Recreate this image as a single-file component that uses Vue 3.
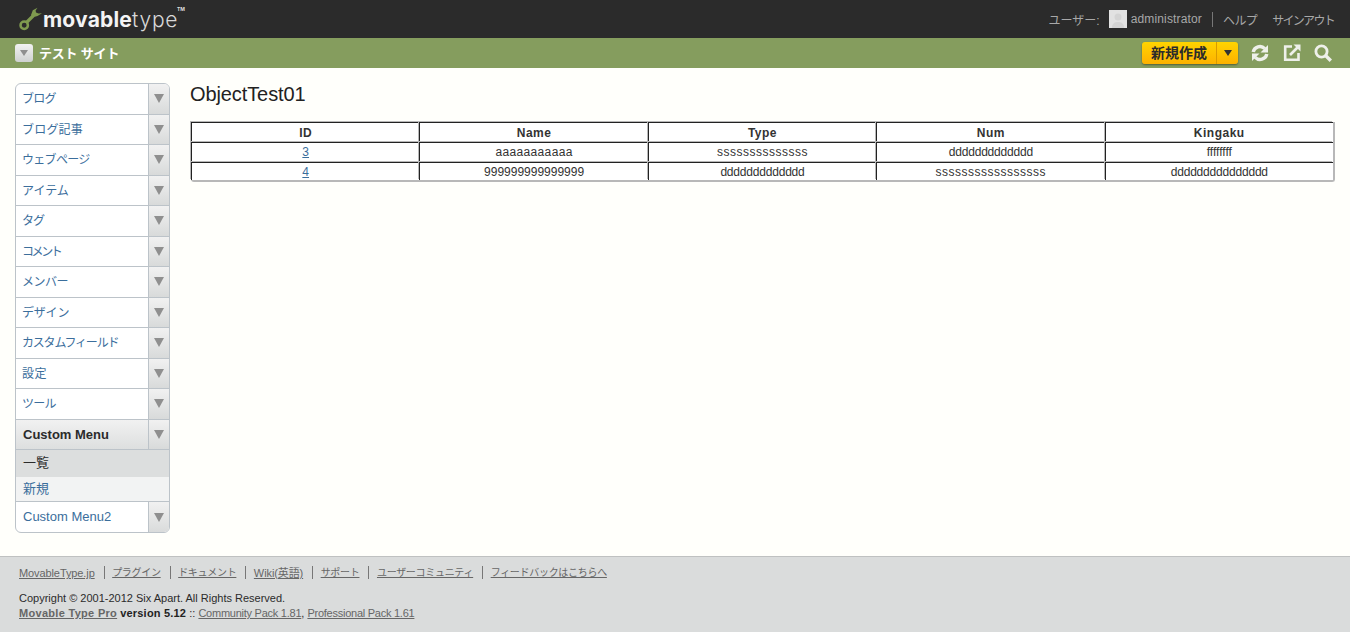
<script setup>
const menu = [
  { t: 'ブログ', ls: -0.7 }, { t: 'ブログ記事', ls: 0.2 }, { t: 'ウェブページ', ls: -0.7 },
  { t: 'アイテム', ls: 0 }, { t: 'タグ', ls: -1 }, { t: 'コメント', ls: -2.4 },
  { t: 'メンバー', ls: -0.5 }, { t: 'デザイン', ls: -0.2 }, { t: 'カスタムフィールド', ls: -1.2 },
  { t: '設定', ls: 0.5 }, { t: 'ツール', ls: -0.7 },
]
const rows = [
  ['3','aaaaaaaaaaa','ssssssssssssss','ddddddddddddd','ffffffff'],
  ['4','999999999999999','ddddddddddddd','sssssssssssssssss','ddddddddddddddd'],
]
const spacing = { a: 0.35, s: 0.5, d: -0.2 }
const heads = ['ID','Name','Type','Num','Kingaku']
const links = ['MovableType.jp','プラグイン','ドキュメント','Wiki(英語)','サポート','ユーザーコミュニティ','フィードバックはこちらへ']
</script>

<template>
  <div class="page">
    <header class="top">
      <div class="logo">
        <svg class="wrench" width="26" height="26" viewBox="0 0 26 26">
          <circle cx="6.200" cy="19.200" r="3.700" fill="none" stroke="#7f9a4f" stroke-width="2.500"/>
          <path d="M8.500 16.500L15.500 9.500" stroke="#7f9a4f" stroke-width="3.200"/>
          <path d="M19.500 1.800L14.800 4.200L13 9L15 11.200L19.500 10L24 7.200L20.500 7.600L18 6.500L17.600 4.400z" fill="#7f9a4f"/>
        </svg>
        <span class="mv">movable</span><span class="ty">type</span><span class="tm">TM</span>
      </div>
      <div class="user">
        <span>ユーザー:</span>
        <span class="avatar">
          <svg width="18" height="18" viewBox="0 0 18 18"><rect width="18" height="18" fill="#e2e2e2"/><circle cx="9" cy="7" r="3.500" fill="#d4d4d4"/><path d="M3 18c0-5 3-6 6-6s6 1 6 6z" fill="#d4d4d4"/></svg>
        </span>
        <span class="name">administrator</span>
        <span class="sep"></span>
        <span class="help">ヘルプ</span>
        <span class="signout">サインアウト</span>
      </div>
    </header>

    <div class="site">
      <div class="site-left">
        <span class="site-btn"><i class="tri small"></i></span>
        <span class="site-name">テスト サイト</span>
      </div>
      <div class="site-right">
        <div class="create">
          <span class="create-label">新規作成</span>
          <span class="create-arrow"><i class="tri dark"></i></span>
        </div>
        <svg class="ic" width="20" height="20" viewBox="0 0 20 20" fill="none">
          <path d="M3.200 9A6.800 6.800 0 0 1 14.800 5.600" stroke="#eef0ea" stroke-width="3.400"/>
          <path d="M18 2v7.500h-7.500z" fill="#eef0ea"/>
          <path d="M16.800 11A6.800 6.800 0 0 1 5.200 14.400" stroke="#eef0ea" stroke-width="3.400"/>
          <path d="M2 18v-7.500h7.500z" fill="#eef0ea"/>
        </svg>
        <svg class="ic" width="20" height="20" viewBox="0 0 20 20" fill="none">
          <path d="M10 3.500H3.200v13.300h13.300V10" stroke="#eef0ea" stroke-width="2.600"/>
          <path d="M8 12l8-8" stroke="#eef0ea" stroke-width="2.600"/>
          <path d="M11.500 1.500H18.500V8.500z" fill="#eef0ea"/>
        </svg>
        <svg class="ic" width="20" height="20" viewBox="0 0 20 20" fill="none">
          <circle cx="8.500" cy="8.500" r="5.600" stroke="#eef0ea" stroke-width="2.800"/>
          <path d="M12.800 12.800l5 5" stroke="#eef0ea" stroke-width="3.400"/>
        </svg>
      </div>
    </div>

    <main class="body">
      <nav class="side">
        <div v-for="m in menu" :key="m.t" class="item">
          <a class="label" :style="{ letterSpacing: m.ls + 'px' }">{{ m.t }}</a>
          <span class="arrow"><i class="tri"></i></span>
        </div>
        <div class="item open">
          <a class="label strong">Custom Menu</a>
          <span class="arrow"><i class="tri"></i></span>
        </div>
        <div class="sub current">一覧</div>
        <div class="sub">新規</div>
        <div class="item last">
          <a class="label">Custom Menu2</a>
          <span class="arrow"><i class="tri"></i></span>
        </div>
      </nav>
      <section class="content">
        <h1>ObjectTest01</h1>
        <table>
          <thead>
            <tr><th v-for="h in heads" :key="h">{{ h }}</th></tr>
          </thead>
          <tbody>
            <tr v-for="r in rows" :key="r[0]">
              <td><a>{{ r[0] }}</a></td>
              <td v-for="(c, i) in r.slice(1)" :key="i" :style="{ letterSpacing: (spacing[c[0]] || 0) + 'px' }">{{ c }}</td>
            </tr>
          </tbody>
        </table>
      </section>
    </main>

    <footer class="foot">
      <div class="links">
        <a v-for="l in links" :key="l">{{ l }}</a>
      </div>
      <div class="copy">Copyright © 2001-2012 Six Apart. All Rights Reserved.</div>
      <div class="ver"><a class="b">Movable Type Pro</a> <b>version 5.12</b> :: <a class="pk">Community Pack 1.81</a>, <a class="pk">Professional Pack 1.61</a></div>
    </footer>
  </div>
</template>

<style>
html, body { margin: 0; background: #fffffb; }
</style>

<style scoped>
.page {
  height: 632px;
  display: flex;
  flex-direction: column;
  overflow: hidden;
  font-family: "Liberation Sans", "Noto Sans CJK JP", sans-serif;
  font-size: 12px;
  color: #2b2b2b;
  background: #fffffb;
}
.top {
  height: 38px;
  background: #2b2b2b;
  display: flex;
  justify-content: space-between;
  align-items: center;
  padding: 0 16px 0 18px;
  flex: none;
}
.logo {
  display: flex;
  align-items: baseline;
  position: relative;
  height: 38px;
  line-height: 40px;
  padding-left: 25px;
  color: #f2f2f2;
  font-family: Inter, "Liberation Sans", sans-serif;
  font-size: 21px;
}
.wrench { position: absolute; left: 0; top: 6px; }
.mv { font-weight: 700; color: #f4f4f4; letter-spacing: .2px; }
.ty { font-weight: 300; color: #d8d8d8; letter-spacing: .7px; }
.tm { position: absolute; left: 159px; top: -11px; font-size: 5px; font-weight: 700; color: #ddd; }
.user {
  display: flex;
  align-items: center;
  color: #a8a8a8;
  font-size: 12px;
}
.avatar { width: 18px; height: 18px; margin: 0 4px 0 9px; display: block; }
.avatar svg { display: block; }
.name { letter-spacing: .15px; }
.sep { width: 1px; height: 15px; background: #777; margin: 0 10px; }
.help { letter-spacing: -.6px; }
.signout { margin-left: 15px; letter-spacing: -1.7px; }
.site {
  height: 30px;
  background: #859d5e;
  flex: none;
  display: flex;
  justify-content: space-between;
  align-items: center;
  padding: 0 17px 0 15px;
}
.site-left { display: flex; align-items: center; }
.site-btn {
  width: 18px;
  height: 18px;
  border-radius: 3px;
  background: linear-gradient(#f2f2f2, #cfd1d1);
  display: flex;
  align-items: center;
  justify-content: center;
}
.site-name { color: #fff; font-size: 13px; font-weight: 700; margin: -2px 0 0 6px; letter-spacing: -.2px; }
.site-right { display: flex; align-items: center; }
.create {
  width: 96px;
  height: 22px;
  border-radius: 3px;
  background: linear-gradient(#ffd400, #fdb100);
  box-shadow: 0 1px 2px rgba(0,0,0,.4);
  display: flex;
  margin-right: 12px;
}
.create-label {
  width: 74px;
  text-align: center;
  font-size: 14px;
  font-weight: 700;
  line-height: 23px;
  color: #2b2b2b;
  border-right: 1px solid #d99a00;
}
.create-arrow { flex: 1; display: flex; align-items: center; justify-content: center; }
.ic { display: block; margin-right: 11.500px; }
.ic:last-child { margin-right: 0; }
.tri {
  display: block;
  width: 0;
  height: 0;
  border-left: 5.500px solid transparent;
  border-right: 5.500px solid transparent;
  border-top: 9px solid #8f8f8f;
}
.tri.small { border-left-width: 4px; border-right-width: 4px; border-top-width: 6px; }
.tri.dark { border-left-width: 4px; border-right-width: 4px; border-top: 6px solid #333; }
.body {
  flex: 1;
  display: flex;
  padding: 15px 15px 0 15px;
  min-height: 0;
}
.side {
  width: 155px;
  height: 450px;
  box-sizing: border-box;
  border: 1px solid #bcc3c9;
  border-radius: 6px;
  flex: none;
  overflow: hidden;
  background: #fff;
}
.item {
  height: 30.500px;
  box-sizing: border-box;
  border-bottom: 1px solid #bcc3c9;
  display: flex;
}
.item.open { height: 30px; }
.item.last { border-bottom: 0; height: 32px; }
.label {
  flex: 1;
  padding-left: 6px;
  line-height: 31px;
  color: #3b6e9c;
  font-size: 12px;
}
.label.strong { color: #2b2b2b; font-weight: 700; font-size: 13px; padding-left: 7px; line-height: 30px; }
.item.last .label { padding-left: 7px; font-size: 13px; line-height: 29px; }
.arrow {
  width: 20px;
  border-left: 1px solid #bcc3c9;
  background: linear-gradient(#f1f1f1, #d8dada);
  display: flex;
  align-items: center;
  justify-content: center;
}
.item.open { background: linear-gradient(#f1f1f1, #dddfdf); }
.sub {
  height: 25px;
  line-height: 23px;
  padding-left: 7px;
  font-size: 13px;
  color: #3b6e9c;
  background: #f2f3f3;
  border-bottom: 1px solid #bcc3c9;
  box-sizing: border-box;
}
.sub.current { height: 27px; line-height: 25px; color: #2b2b2b; background: #dcdede; border-bottom: 0; }
.content { flex: 1; padding-left: 20px; min-width: 0; }
h1 {
  margin: -1px 0 0;
  font-size: 20px;
  font-weight: 400;
  letter-spacing: -.1px;
  line-height: 24px;
  color: #222;
  height: 24px;
}
table {
  margin: 16px 0 0 1px;
  width: calc(100% - 1px);
  table-layout: fixed;
  border-collapse: separate;
  border-spacing: 0;
  border-right: 2px solid #b8b8b8;
  border-bottom: 2px solid #b8b8b8;
  border-radius: 0 0 3px 3px;
  font-size: 12px;
}
th, td {
  height: 20px;
  padding: 1px 0 2px;
  text-align: center;
  border-top: 1px solid #222;
  border-left: 1px solid #222;
  box-sizing: border-box;
  background: #fff;
  color: #333;
  box-shadow: -1px -1px 0 #b8b8b8;
}
th { font-weight: 700; letter-spacing: .5px; padding: 1px 0 0; }
tbody tr:last-child td { height: 18px; padding-bottom: 0; }
td a { color: #3b6e9c; text-decoration: underline; }
.foot {
  height: 76px;
  flex: none;
  box-sizing: border-box;
  background: #dadcdc;
  border-top: 1px solid #bfc1c1;
  padding: 8px 19px 0;
  font-size: 11px;
  color: #2b2b2b;
}
.foot a { color: #666; text-decoration: underline; }
.links { display: flex; height: 16px; line-height: 16px; margin-bottom: 10px; font-size: 10px; letter-spacing: -.3px; }
.links a { padding-right: 10px; margin-right: 7.500px; position: relative; }
.links a:first-child, .links a:nth-child(4) { font-size: 11px; letter-spacing: -.1px; }
.links a:not(:last-child)::after {
  content: "";
  position: absolute;
  right: 0;
  top: 1px;
  width: 1px;
  height: 13px;
  background: #777;
}
.copy { line-height: 15px; }
.ver { line-height: 15px; }
.ver .b { font-weight: 700; letter-spacing: .3px; }
.ver b { color: #222; letter-spacing: .2px; }
.ver .pk { letter-spacing: -.25px; }
</style>
